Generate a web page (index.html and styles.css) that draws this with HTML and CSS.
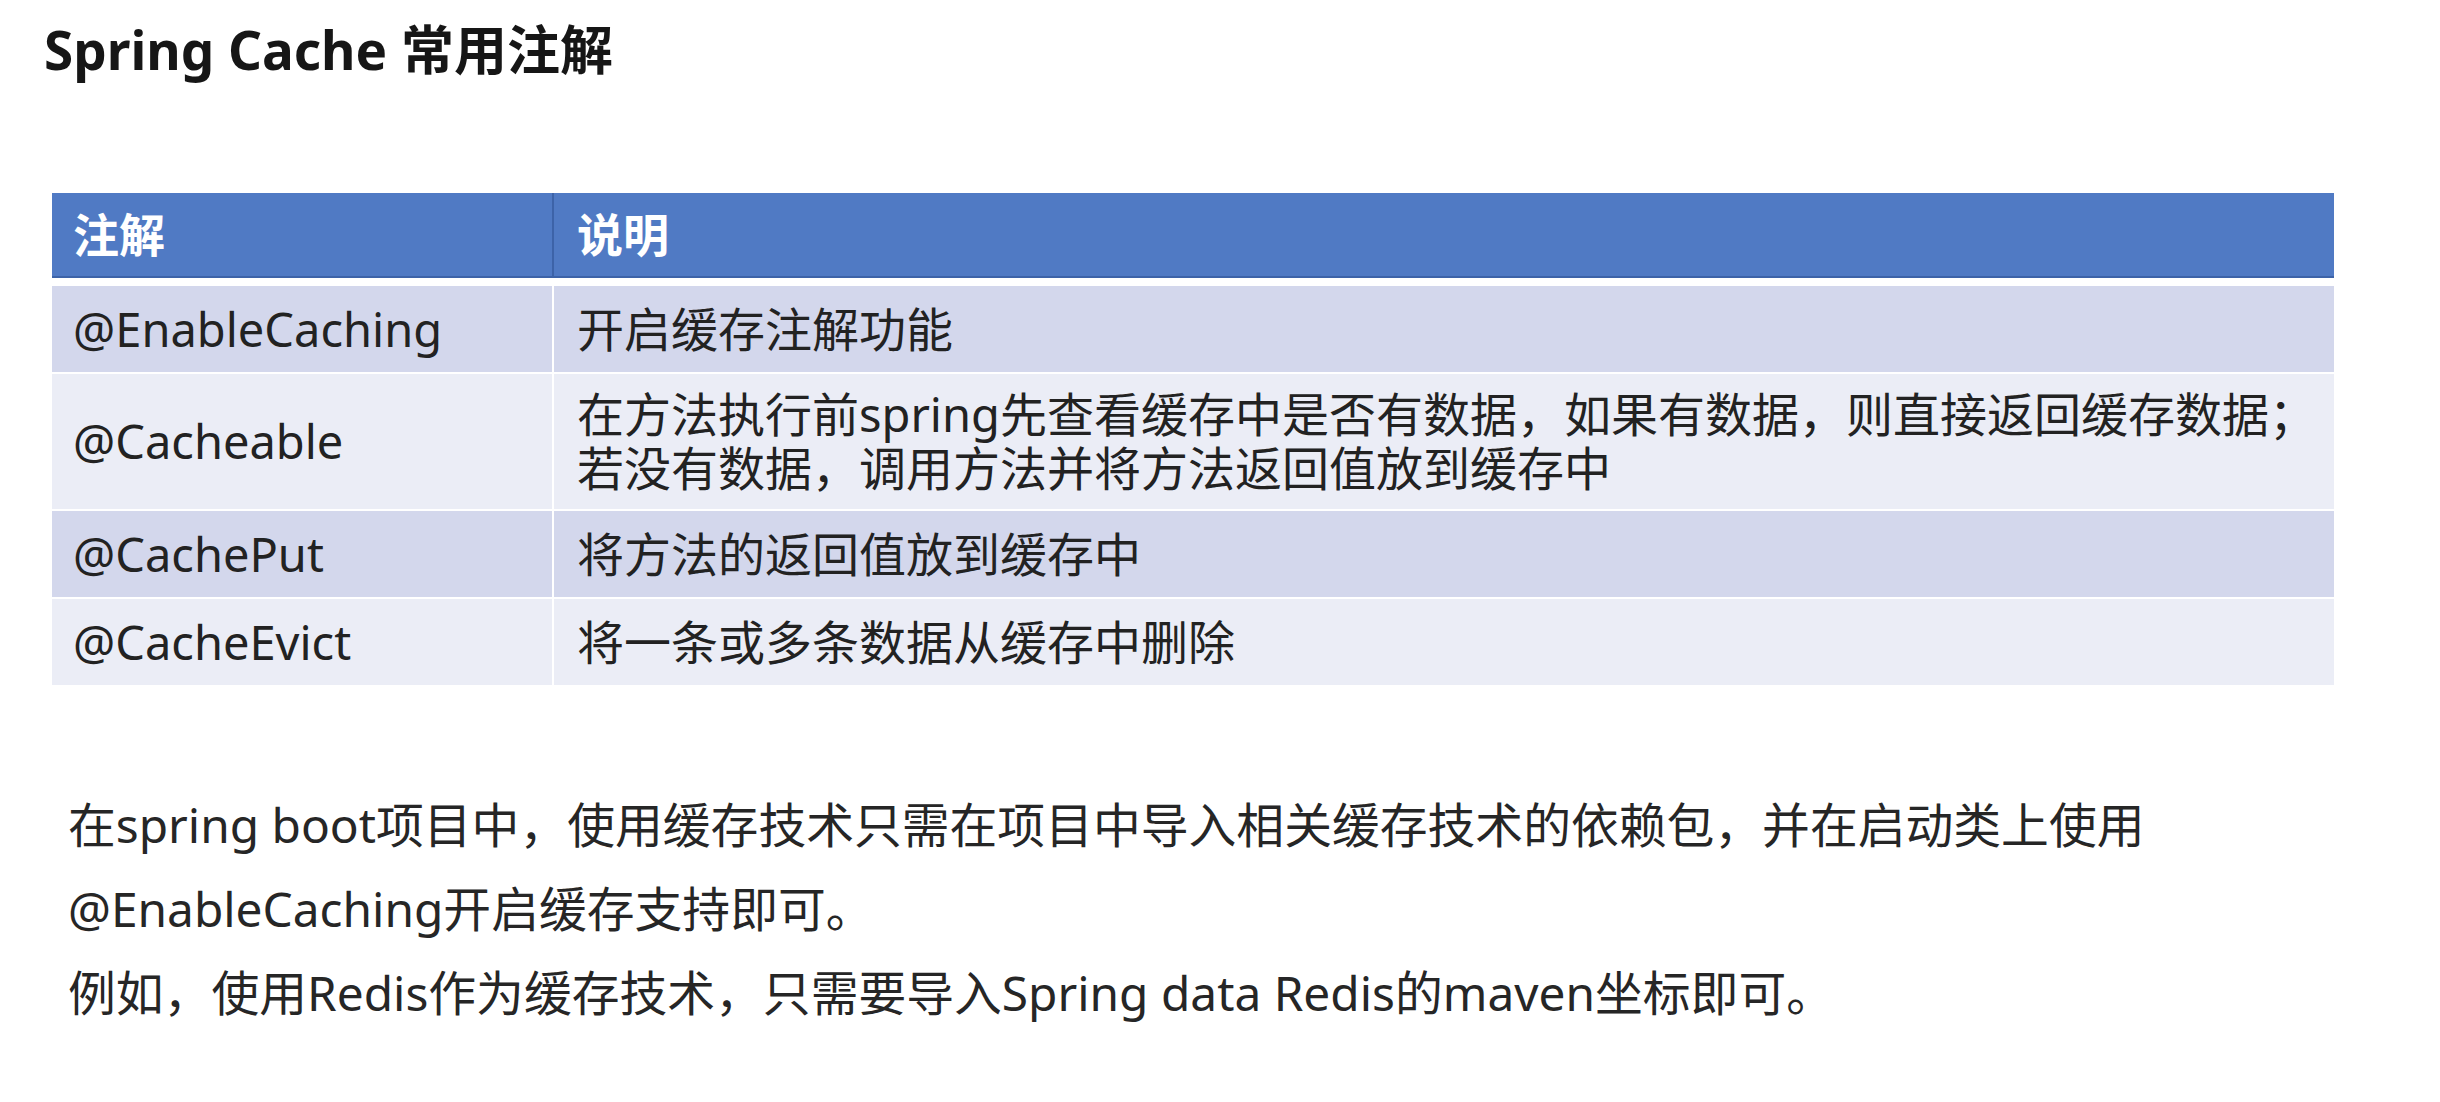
FILE: index.html
```html
<!DOCTYPE html>
<html lang="zh-CN">
<head>
<meta charset="utf-8">
<title>Spring Cache 常用注解</title>
<link rel="stylesheet" href="styles.css">
</head>
<body>
<div class="page">
  <h1 class="title">Spring Cache 常用注解</h1>
  <div class="table">
    <div class="row head">
      <div class="cell c1">注解</div>
      <div class="cell c2">说明</div>
    </div>
    <div class="row dark">
      <div class="cell c1">@EnableCaching</div>
      <div class="cell c2">开启缓存注解功能</div>
    </div>
    <div class="row light tall">
      <div class="cell c1">@Cacheable</div>
      <div class="cell c2">
        <div class="line">在方法执行前spring先查看缓存中是否有数据，如果有数据，则直接返回缓存数据；</div>
        <div class="line">若没有数据，调用方法并将方法返回值放到缓存中</div>
      </div>
    </div>
    <div class="row dark">
      <div class="cell c1">@CachePut</div>
      <div class="cell c2">将方法的返回值放到缓存中</div>
    </div>
    <div class="row light">
      <div class="cell c1">@CacheEvict</div>
      <div class="cell c2">将一条或多条数据从缓存中删除</div>
    </div>
  </div>
  <div class="notes">
    <p>在spring boot项目中，使用缓存技术只需在项目中导入相关缓存技术的依赖包，并在启动类上使用</p>
    <p>@EnableCaching开启缓存支持即可。</p>
    <p>例如，使用Redis作为缓存技术，只需要导入Spring data Redis的maven坐标即可。</p>
  </div>
</div>
</body>
</html>
```

FILE: styles.css
```css
html, body {
  margin: 0;
  padding: 0;
  background: #ffffff;
}

body {
  font-family: "Noto Sans", "Noto Sans CJK SC", sans-serif;
  color: #222222;
}

.page {
  width: 2440px;
  height: 1102px;
  overflow: hidden;
}

.title {
  margin: 20px 0 0 44px;
  font-size: 53px;
  line-height: 60px;
  font-weight: 700;
  color: #161616;
}

.table {
  margin: 113px 0 0 52px;
  width: 2282px;
}

.row {
  display: grid;
  grid-template-columns: 500px 1fr;
  column-gap: 2px;
  margin-top: 2px;
  background: #ffffff;
}

.cell {
  font-size: 47px;
  line-height: 54px;
  padding: 16px 0;
  white-space: nowrap;
  display: flex;
  flex-direction: column;
  justify-content: center;
}

.tall .cell {
  padding-top: 13px;
  padding-bottom: 14px;
}

.line {
  height: 54px;
}

.c1 {
  padding-left: 21px;
}

.c2 {
  padding-left: 23px;
  display: block;
}

.head {
  margin-top: 0;
  margin-bottom: 8px;
  background: #3d63a8;
  border-bottom: 2px solid #3d63a8;
}

.head .cell {
  background: #507ac4;
  color: #ffffff;
  font-weight: 700;
  font-size: 46px;
  height: 83px;
  padding-top: 0;
  padding-bottom: 0;
  line-height: 83px;
  box-sizing: border-box;
}

.dark .cell {
  background: #d3d7ec;
}

.light .cell {
  background: #ebedf6;
}

.notes {
  margin: 98px 0 0 68px;
  font-size: 47.8px;
  line-height: 84px;
  color: #262626;
}

.notes p {
  margin: 0;
}
```
